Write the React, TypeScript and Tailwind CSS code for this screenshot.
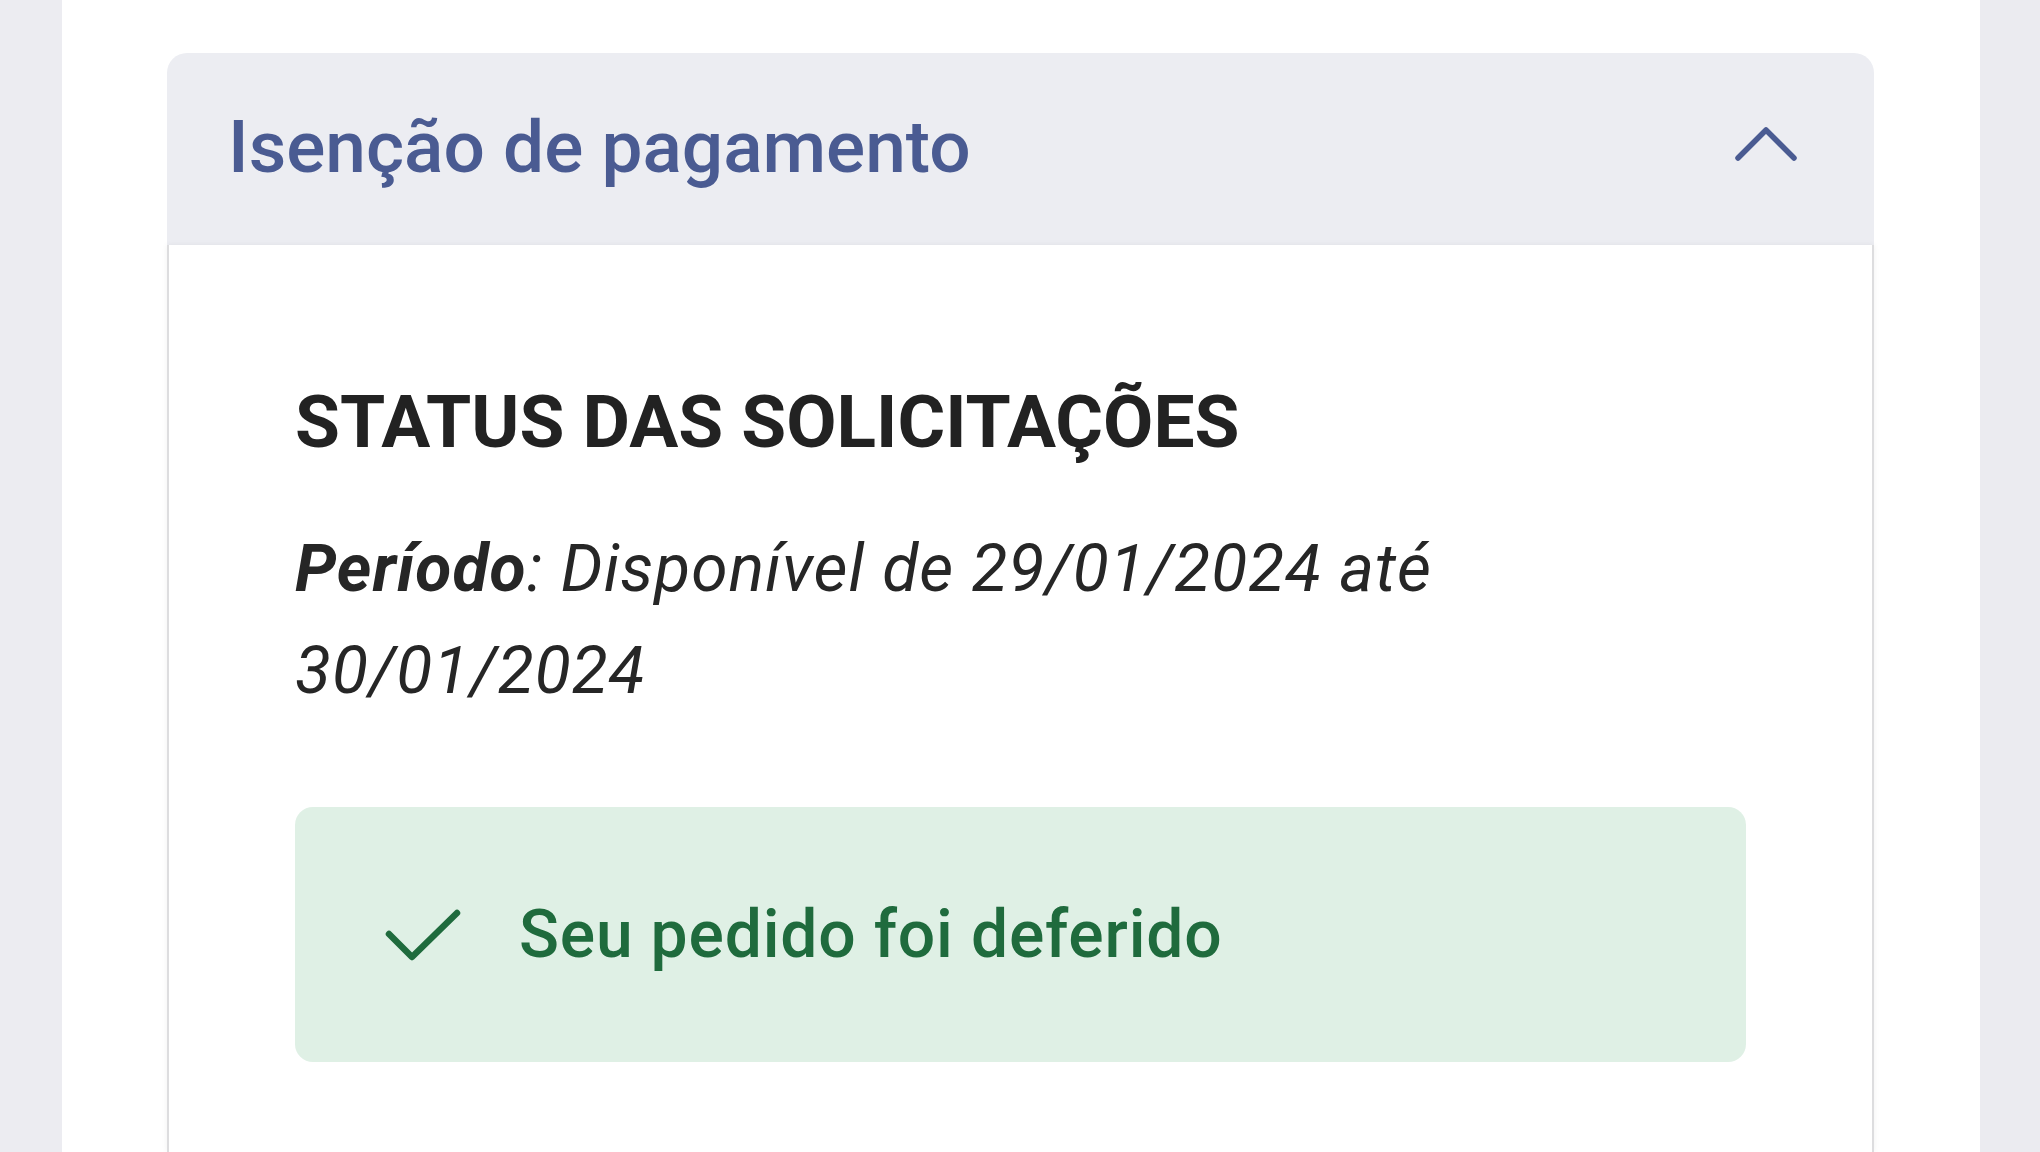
import React from "react";

export default function App() {
  return (
    <div
      className="flex h-[1152px] w-full overflow-hidden bg-white"
      style={{ fontFamily: "Roboto, 'Noto Sans', Arial, sans-serif" }}
    >
      <div className="w-[62px] shrink-0 bg-[#ececf1]" />
      <div className="flex flex-1 flex-col bg-white pl-[105px] pr-[106px] pt-[53px]">
        <div className="flex flex-1 flex-col">
          <div className="flex h-[192px] items-center justify-between rounded-t-[20px] bg-[#ecedf2] pb-[4px] pl-[61px] pr-[76px]">
            <h2 className="text-[73px] font-medium leading-none text-[#4a5b92]">
              Isenção de pagamento
            </h2>
            <svg width="64" height="36" viewBox="0 0 64 36" fill="none" className="mb-[6px]">
              <polyline
                points="4,32 32,4 60,32"
                stroke="#4a5b92"
                strokeWidth="5.5"
                strokeLinecap="round"
                strokeLinejoin="round"
              />
            </svg>
          </div>
          <div className="flex-1 border-x-2 border-[#dddddf] bg-white px-[126px] pt-[141px] shadow-[0_0_6px_rgba(0,0,0,0.06)]">
            <h3 className="text-[73px] font-bold leading-none text-[#222222]">
              STATUS DAS SOLICITAÇÕES
            </h3>
            <p className="mt-[59px] text-[66px] italic leading-[102px] tracking-[1px] text-[#262626]">
              <span className="font-bold">Período</span>: Disponível de 29/01/2024 até
              <br />
              30/01/2024
            </p>
            <div className="mt-[85px] flex h-[255px] items-center rounded-[18px] bg-[#dff0e5] pl-[87px]">
              <svg width="82" height="58" viewBox="0 0 82 58" fill="none" className="shrink-0">
                <polyline
                  points="7,28 30,51 75,7"
                  stroke="#1f6b3d"
                  strokeWidth="6.5"
                  strokeLinecap="round"
                  strokeLinejoin="round"
                />
              </svg>
              <span className="ml-[55px] text-[66px] font-medium leading-none tracking-[0.8px] text-[#1f6b3d]">
                Seu pedido foi deferido
              </span>
            </div>
          </div>
        </div>
      </div>
      <div className="w-[60px] shrink-0 bg-[#ebebf0]" />
    </div>
  );
}
